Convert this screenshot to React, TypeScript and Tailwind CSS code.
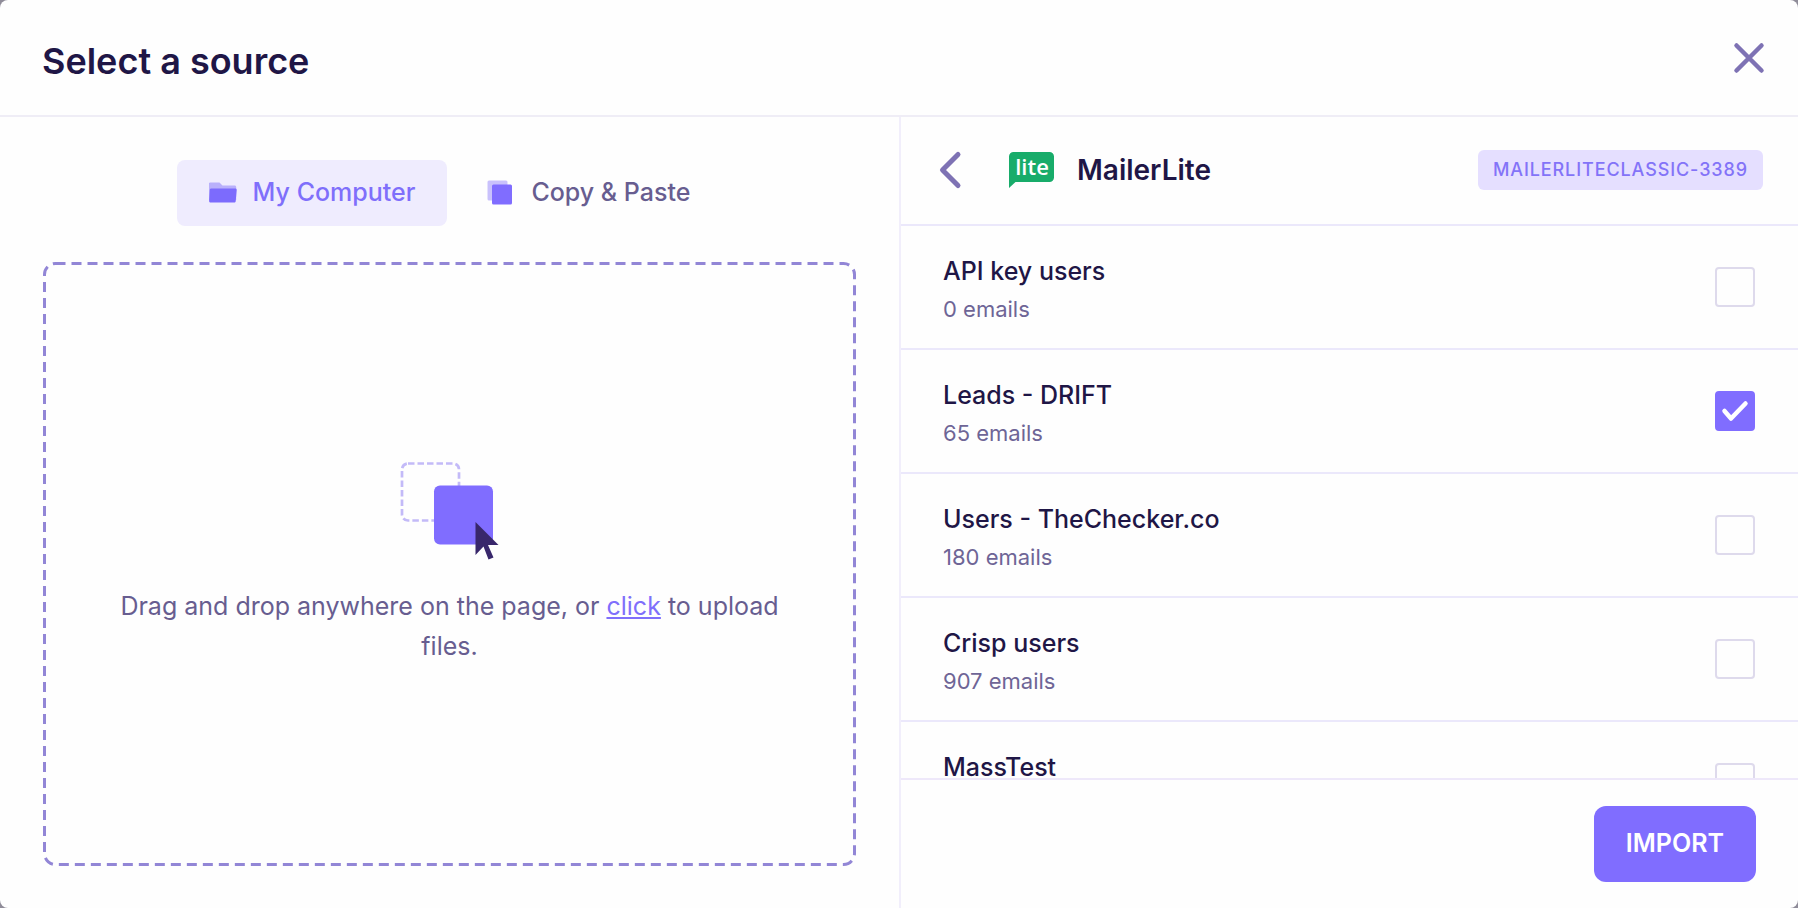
import { useState } from "react";

interface MailingList {
  id: string;
  name: string;
  emails: number;
}

const LISTS: MailingList[] = [
  { id: "api-key-users", name: "API key users", emails: 0 },
  { id: "leads-drift", name: "Leads - DRIFT", emails: 65 },
  { id: "users-thechecker", name: "Users - TheChecker.co", emails: 180 },
  { id: "crisp-users", name: "Crisp users", emails: 907 },
  { id: "mass-test", name: "MassTest", emails: 12 },
];

function FolderIcon() {
  return (
    <svg width="28" height="22" viewBox="0 0 28 22" aria-hidden="true">
      <path d="M0 1.500C0 .7.7.500 1.500.500H10.500l3 3H25.500c1 0 1.700.700 1.700 1.700V18H0z" fill="#b9b0fb" />
      <path d="M2.200 6.500h24.200c.8 0 1.400.700 1.300 1.500l-1 11.200c-.1.800-.700 1.300-1.500 1.300H1.500C.7 20.500 0 19.900.1 19L.8 7.800c.1-.700.600-1.300 1.400-1.300z" fill="#7c6bfd" />
    </svg>
  );
}

function CopyIcon() {
  return (
    <svg width="28" height="26" viewBox="0 0 28 26" aria-hidden="true">
      <rect x="0.500" y="0.500" width="20" height="20" rx="1.500" fill="#c9c1fc" />
      <rect x="5" y="4.500" width="20" height="20" rx="1.500" fill="#806dff" />
    </svg>
  );
}

function DropIllustration() {
  return (
    <svg width="100" height="100" viewBox="0 0 100 100" aria-hidden="true">
      <rect x="2" y="1.500" width="57" height="57" rx="6" fill="none" stroke="#c3baf8" strokeWidth="2.700" strokeDasharray="6.500 3" />
      <rect x="34" y="23.500" width="59" height="59" rx="6" fill="#806dff" />
      <path d="M75.500 60v33l8-8.500 5 13 5-2-5.500-12.500H98.500z" fill="#38276b" />
    </svg>
  );
}

function LiteLogo() {
  return (
    <svg width="46" height="36" viewBox="0 0 46 36" aria-hidden="true">
      <path d="M4.500 0H40.500A4.500 4.500 0 0 1 45 4.500V25.500A4.500 4.500 0 0 1 40.500 30H6.500L0 36V4.500A4.500 4.500 0 0 1 4.500 0z" fill="#18ac6a" />
      <text x="23" y="23" textAnchor="middle" fontSize="22" fontWeight="600" fill="#fff" className="font-['Open_Sans',sans-serif]">
        lite
      </text>
    </svg>
  );
}

export default function App() {
  const [selected, setSelected] = useState<string[]>(["leads-drift"]);

  const toggle = (id: string) =>
    setSelected((prev) =>
      prev.includes(id) ? prev.filter((s) => s !== id) : [...prev, id]
    );

  return (
    <div className="h-screen bg-[#8f8c99] font-['Inter',sans-serif] text-[#1f1646]">
      <div className="flex h-full flex-col overflow-hidden rounded-lg bg-[#fefefe]">
        <header className="flex shrink-0 items-center justify-between border-b-2 border-[#efedf6] pt-[34px] pr-8 pb-[26px] pl-[42px]">
          <h1 className="text-[36px] leading-[55px] font-semibold">Select a source</h1>
          <button type="button" aria-label="Close" className="pb-2">
            <svg width="34" height="34" viewBox="0 0 34 34" fill="none" stroke="#7e72b4" strokeWidth="4.500" strokeLinecap="round" aria-hidden="true">
              <path d="M4.500 4.500l25 25M29.500 4.500l-25 25" />
            </svg>
          </button>
        </header>

        <div className="grid min-h-0 flex-1 grid-cols-2">
          {/* Upload */}
          <section className="flex min-h-0 flex-col px-[43px] pt-[43px] pb-[42px]">
            <div className="flex justify-center gap-2">
              <button type="button" className="flex h-[66px] items-center gap-4 rounded-lg bg-[#efecfe] px-8 text-[25px] font-medium text-[#7f6ffb]">
                <FolderIcon />
                My Computer
              </button>
              <button type="button" className="flex h-[66px] items-center gap-4 rounded-lg px-8 text-[25px] font-medium text-[#675d90]">
                <CopyIcon />
                Copy &amp; Paste
              </button>
            </div>

            <div className="relative mt-9 flex flex-1 flex-col items-center justify-center px-14">
              <svg className="absolute inset-0 size-full" aria-hidden="true">
                <rect x="1.500" y="1.500" rx="11" className="h-[calc(100%-3px)] w-[calc(100%-3px)]" fill="none" stroke="#9286d6" strokeWidth="3" strokeDasharray="10 6" />
              </svg>
              <DropIllustration />
              <p className="relative mt-6 text-center text-[25px] leading-10 text-[#675d90]">
                Drag and drop anywhere on the page, or{" "}
                <a href="#upload" className="text-[#7f6ffb] underline">click</a> to upload files.
              </p>
            </div>
          </section>

          {/* Lists of the connected account */}
          <section className="flex min-h-0 flex-col border-l-2 border-[#f1eefb]">
            <div className="flex h-[109px] shrink-0 items-center border-b-2 border-[#ebe8fb] pr-[35px] pb-0.5 pl-9">
              <button type="button" aria-label="Back">
                <svg width="26" height="40" viewBox="0 0 26 40" fill="none" stroke="#7e72b4" strokeWidth="5" strokeLinecap="round" strokeLinejoin="round" aria-hidden="true">
                  <path d="M21 4.500L5.500 20L21 35.500" />
                </svg>
              </button>
              <div className="ml-[46px]">
                <LiteLogo />
              </div>
              <h2 className="ml-[22px] text-[28px] font-semibold">MailerLite</h2>
              <span className="ml-auto rounded-md bg-[#e5dfff] px-[15px] text-[18px] leading-10 font-medium tracking-wider text-[#8373f8]">
                MAILERLITECLASSIC-3389
              </span>
            </div>

            <ul className="min-h-0 flex-1 overflow-hidden">
              {LISTS.map((list) => (
                <li key={list.id} className="border-b-2 border-[#ebe8fb]">
                  <label className="flex h-[122px] items-center justify-between pr-[43px] pl-[42px]">
                    <span className="flex flex-col pt-1">
                      <span className="text-[25px] leading-10 font-medium">{list.name}</span>
                      <span className="text-[22px] leading-9 text-[#6e6596]">{list.emails} emails</span>
                    </span>
                    <span className="grid">
                      <input
                        type="checkbox"
                        checked={selected.includes(list.id)}
                        onChange={() => toggle(list.id)}
                        className="peer col-start-1 row-start-1 size-10 appearance-none rounded-sm border-2 border-[#dedaec] checked:border-[#806dff] checked:bg-[#806dff]"
                      />
                      <svg className="pointer-events-none invisible col-start-1 row-start-1 size-10 peer-checked:visible" viewBox="0 0 40 40" fill="none" stroke="#fff" strokeWidth="4.500" strokeLinecap="round" strokeLinejoin="round" aria-hidden="true">
                        <path d="M9.500 20L16 27.500L30.500 12.500" />
                      </svg>
                    </span>
                  </label>
                </li>
              ))}
            </ul>

            <footer className="flex h-[130px] shrink-0 justify-end border-t-2 border-[#eee8fa] pt-[26px] pr-[42px]">
              <button type="button" className="h-[76px] rounded-xl bg-[#806dff] px-8 text-[25px] font-semibold text-white">
                IMPORT
              </button>
            </footer>
          </section>
        </div>
      </div>
    </div>
  );
}
